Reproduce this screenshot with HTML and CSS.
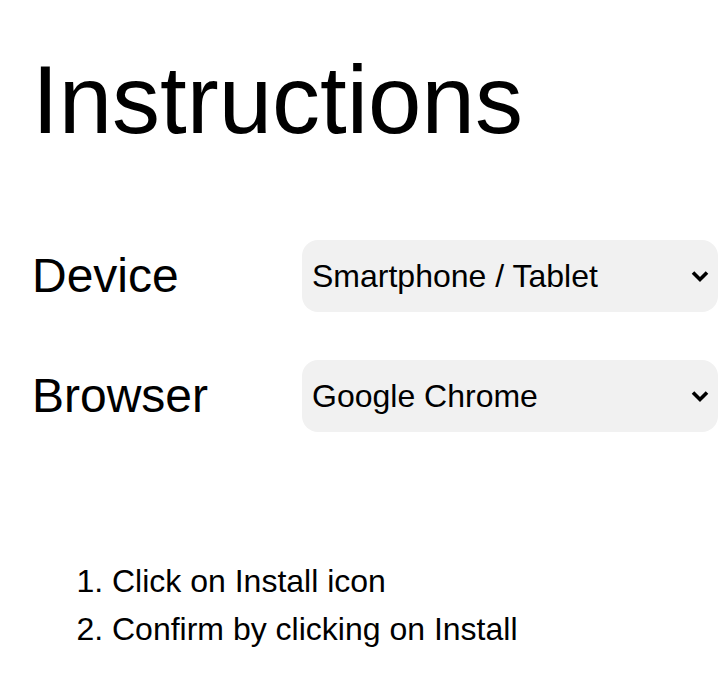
FILE: index.html
```html
<!DOCTYPE html>
<html lang="en">
<head>
<meta charset="utf-8">
<title>Instructions</title>
<link rel="stylesheet" href="styles.css">
</head>
<body>
<main class="page">
  <h1 class="title">Instructions</h1>
  <form class="options">
    <label class="option-label" for="device">Device</label>
    <div class="select-wrap">
      <select class="option-select" id="device">
        <option>Smartphone / Tablet</option>
        <option>Desktop / Laptop</option>
      </select>
      <svg class="chevron" width="20" height="14" viewBox="0 0 20 14" aria-hidden="true"><path d="M3 3.5 L10 10.5 L17 3.5" fill="none" stroke="#000" stroke-width="3.6" stroke-linecap="butt" stroke-linejoin="miter"/></svg>
    </div>
    <label class="option-label" for="browser">Browser</label>
    <div class="select-wrap">
      <select class="option-select" id="browser">
        <option>Google Chrome</option>
        <option>Safari</option>
        <option>Firefox</option>
      </select>
      <svg class="chevron" width="20" height="14" viewBox="0 0 20 14" aria-hidden="true"><path d="M3 3.5 L10 10.5 L17 3.5" fill="none" stroke="#000" stroke-width="3.6" stroke-linecap="butt" stroke-linejoin="miter"/></svg>
    </div>
  </form>
  <ol class="steps">
    <li>Click on Install icon</li>
    <li>Confirm by clicking on Install</li>
  </ol>
</main>
</body>
</html>
```

FILE: styles.css
```css
html, body {
  margin: 0;
  padding: 0;
  background: #ffffff;
}

body {
  font-family: "Liberation Sans", Arial, sans-serif;
  color: #000000;
}

.page {
  padding: 45px 0 0 32px;
}

.title {
  margin: 0;
  font-size: 96px;
  font-weight: 400;
  line-height: 110px;
}

.options {
  margin-top: 85px;
  display: grid;
  grid-template-columns: 270px 416px;
  row-gap: 48px;
  align-items: center;
}

.option-label {
  font-size: 48px;
  line-height: 56px;
}

.select-wrap {
  position: relative;
  height: 72px;
}

.option-select {
  -webkit-appearance: none;
  appearance: none;
  width: 100%;
  height: 72px;
  font-family: "Liberation Sans", Arial, sans-serif;
  font-size: 32px;
  color: #000000;
  background-color: #f1f1f1;
  border: none;
  border-radius: 16px;
  padding: 0 40px 0 10px;
  margin: 0;
}

.chevron {
  position: absolute;
  right: 8px;
  top: 29px;
  pointer-events: none;
}

.steps {
  margin: 125px 0 0 0;
  padding-left: 80px;
  font-size: 32px;
  line-height: 48px;
}
```
